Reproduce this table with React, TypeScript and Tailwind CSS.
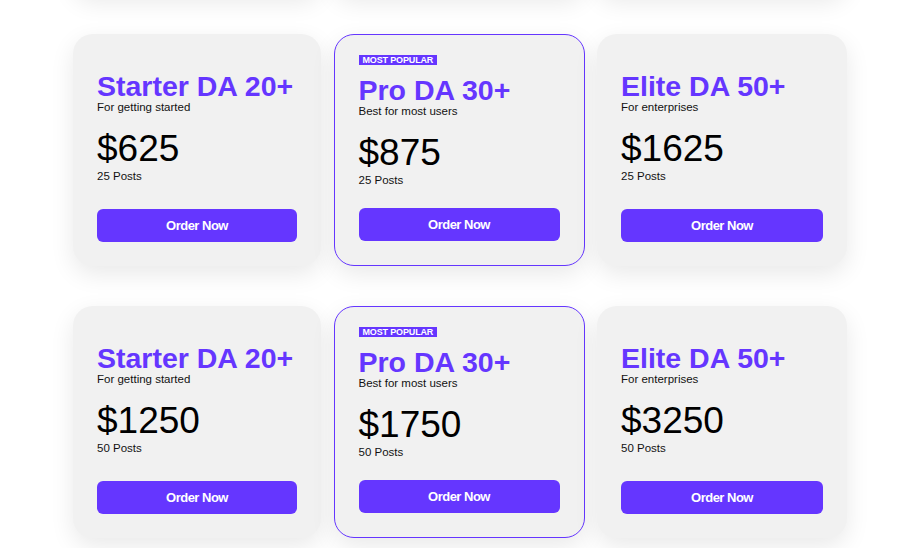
import React from "react";

type Plan = {
  name: string;
  tagline: string;
  price: number;
  popular?: boolean;
};

const plans: Plan[] = [
  { name: "Starter DA 20+", tagline: "For getting started", price: 25 },
  { name: "Pro DA 30+", tagline: "Best for most users", price: 35, popular: true },
  { name: "Elite DA 50+", tagline: "For enterprises", price: 65 },
];

const packs = [25, 50];

const PlanCard = ({ plan, posts }: { plan: Plan; posts: number }) => {
  return (
    <div
      className={`flex h-[232px] flex-col rounded-[20px] bg-[#f1f1f1] px-6 pb-6 shadow-[0_8px_24px_rgba(0,0,0,0.09)] ${
        plan.popular ? "border border-[#6536ff] pt-5" : "pt-[38px]"
      }`}
    >
      {plan.popular && (
        <span className="w-fit bg-[#6536ff] px-1 text-[9px] font-bold uppercase leading-[10px] tracking-[-0.15px] text-white">
          Most Popular
        </span>
      )}

      <h3
        className={`text-[28.5px] font-bold leading-[28px] text-[#6536ff] ${
          plan.popular ? "mt-[11px]" : ""
        }`}
      >
        {plan.name}
      </h3>
      <p className="text-[11.5px] leading-[14px] text-[#111]">{plan.tagline}</p>

      <div className="mt-[15px] text-[37px] leading-[40px] text-black">
        ${plan.price * posts}
      </div>
      <p className="text-[11.5px] leading-[15px] text-[#111]">{posts} Posts</p>

      <button className="mt-auto h-[33px] w-full rounded-md bg-[#6536ff] text-[13px] font-bold tracking-[-0.5px] text-white">
        Order Now
      </button>
    </div>
  );
};

const App = () => {
  return (
    <div
      className="h-[548px] overflow-hidden bg-white"
      style={{ fontFamily: '"Liberation Sans", Arial, sans-serif' }}
    >
      <div className="mt-[-238px] flex flex-col gap-10 pl-[73px]">
        {/* previous pack, scrolled out of view */}
        <div className="grid w-[774px] grid-cols-[248px_251px_250px] gap-x-[12.5px]">
          {plans.map((plan) => (
            <div
              key={plan.name}
              className={`h-[232px] rounded-[20px] bg-[#f1f1f1] shadow-[0_8px_24px_rgba(0,0,0,0.09)] ${
                plan.popular ? "border border-[#6536ff]" : ""
              }`}
            />
          ))}
        </div>

        {packs.map((posts) => (
          <div
            key={posts}
            className="grid w-[774px] grid-cols-[248px_251px_250px] gap-x-[12.5px]"
          >
            {plans.map((plan) => (
              <PlanCard key={plan.name} plan={plan} posts={posts} />
            ))}
          </div>
        ))}
      </div>
    </div>
  );
};

export default App;
